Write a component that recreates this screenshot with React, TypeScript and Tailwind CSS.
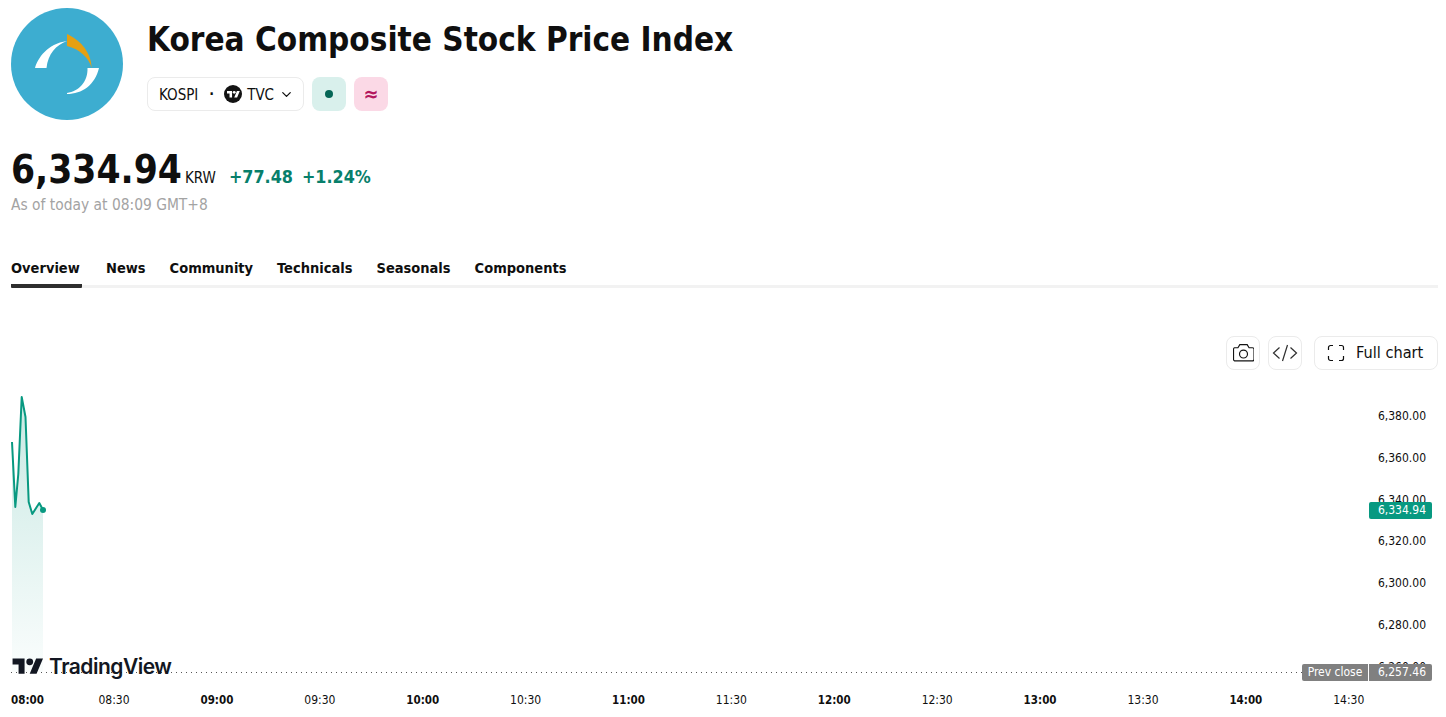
import React from 'react';
import { ChevronDown } from 'lucide-react';

const tabs = ['Overview', 'News', 'Community', 'Technicals', 'Seasonals', 'Components'];

const priceTicks = ['6,380.00', '6,360.00', '6,340.00', '6,320.00', '6,300.00', '6,280.00', '6,260.00'];

const timeTicks = [
  { label: '09:00', bold: true },
  { label: '09:30' },
  { label: '10:00', bold: true },
  { label: '10:30' },
  { label: '11:00', bold: true },
  { label: '11:30' },
  { label: '12:00', bold: true },
  { label: '12:30' },
  { label: '13:00', bold: true },
  { label: '13:30' },
  { label: '14:00', bold: true },
  { label: '14:30' },
];

const linePoints = '12,442 15.3,507 18.3,474 21.7,397 25.5,417 28.7,502 32.3,514 39.3,503 43,510';

const TvMark = ({ className }: { className?: string }) => (
  <svg viewBox="0 0 36 28" className={className} fill="currentColor">
    <path d="M14 22H7V11H0V4h14v18zM28 22h-8l7.5-18h8L28 22z" />
    <circle cx="20" cy="8" r="4" />
  </svg>
);

const KospiLogo = () => (
  <div className="w-[112px] h-[112px] rounded-full bg-[#3dadd0] shrink-0">
    <svg viewBox="0 0 112 112" className="w-full h-full">
      <path d="M24 60 C27 50 36 36 56 33 C45 37 37 46 35.5 60 Z" fill="#fff" />
      <path d="M56 26 C67 31 80 42 80.7 60 C78 50 69 41 56 38 Z" fill="#e5a012" />
      <path d="M88 60 C84 77 71 86 56 86 L56 85 C68 83 77 74 76.5 60 Z" fill="#fff" />
    </svg>
  </div>
);

const App = () => {
  return (
    <div className="w-[1446px] h-[717px] overflow-hidden bg-white text-[#131722] font-['DejaVu_Sans_Condensed','DejaVu_Sans',sans-serif] font-stretch-condensed">
      <div className="px-[11px] pt-2">
        <div className="flex gap-6">
          <KospiLogo />
          <div className="pt-[9px]">
            <h1 className="text-[33px] leading-[46px] font-bold text-[#0f0f0f]">Korea Composite Stock Price Index</h1>
            <div className="flex items-center gap-2 mt-[14px]">
              <div className="h-[34px] w-[157px] flex items-center pl-[11px] rounded-lg border border-[#ebebeb] text-[15px] leading-[22px] text-[#0f0f0f]">
                <span className="pt-[1px]">KOSPI</span>
                <span className="ml-[11px] mr-[10px] text-[14px] font-bold">·</span>
                <span className="w-[18px] h-[18px] rounded-full bg-[#131313] text-white flex items-center justify-center">
                  <TvMark className="w-[13px] h-[11px]" />
                </span>
                <span className="ml-[5px] pt-[1px]">TVC</span>
                <ChevronDown className="w-[15px] h-[15px] ml-[5px]" />
              </div>
              <div className="w-[34px] h-[34px] rounded-lg bg-[#d9f0ec] flex items-center justify-center">
                <span className="w-2 h-2 rounded-full bg-[#056656]" />
              </div>
              <div className="w-[34px] h-[34px] rounded-lg bg-[#fbd9e6] flex items-center justify-center text-[#b3175e] text-[20px] font-bold">≈</div>
            </div>
          </div>
        </div>

        <div className="flex items-baseline mt-[26px] h-[48px]">
          <span className="text-[38.5px] leading-[48px] font-bold text-[#0f0f0f]">6,334.94</span>
          <span className="text-[15px] ml-[3px] text-[#0f0f0f]">KRW</span>
          <span className="text-[17.8px] font-bold text-[#087f6b] ml-[13px]">+77.48</span>
          <span className="text-[17.8px] font-bold text-[#087f6b] ml-[9px]">+1.24%</span>
        </div>
        <p className="text-[15.4px] leading-[20px] text-[#a3a3a3] mt-[1px]">As of today at 08:09 GMT+8</p>

        <div className="mt-[37px] flex gap-6 border-b-[3px] border-[#f2f2f2] h-[36px] w-[1427px]">
          {tabs.map((tab, index) => (
            <div
              key={index}
              className={`h-[36px] pt-[6px] text-[14.5px] font-bold text-[#0f0f0f] ${index === 0 ? 'w-[71px] border-b-[4px] border-[#2e2e2e] rounded-b-[1px]' : ''}`}
            >
              {tab}
            </div>
          ))}
        </div>

        <div className="flex justify-end mt-[48px] w-[1427px]">
          <button className="w-[34px] h-[34px] rounded-lg border border-[#ebebeb] flex items-center justify-center text-[#131313]">
            <svg viewBox="1 1 20 17" className="w-[21px] h-[18px]" fill="none" stroke="currentColor" strokeWidth="1.1">
              <path d="M2.5 4.5h3.2L7.5 1.5h7l1.8 3h3.2a1.5 1.5 0 0 1 1.5 1.5v9.5a1.5 1.5 0 0 1-1.5 1.5h-17A1.5 1.5 0 0 1 1.5 15.5V6a1.5 1.5 0 0 1 1-1.5z" />
              <circle cx="11" cy="10.5" r="3.8" />
            </svg>
          </button>
          <button className="w-[34px] h-[34px] ml-2 rounded-lg border border-[#ebebeb] flex items-center justify-center text-[#2e2e2e]">
            <svg viewBox="0 0 26 18" className="w-[26px] h-[18px]" fill="none" stroke="currentColor" strokeWidth="1.2">
              <path d="M7.5 3.5 1.5 9l6 5.5M18.5 3.5l6 5.5-6 5.5M15.5 1l-5 16" />
            </svg>
          </button>
          <button className="w-[124px] h-[34px] ml-3 rounded-lg border border-[#ebebeb] flex items-center pl-[12px] text-[16.2px] text-[#0f0f0f]">
            <svg viewBox="0 0 18 18" className="w-[18px] h-[18px] mr-[11px]" fill="none" stroke="currentColor" strokeWidth="1.2">
              <path d="M1.5 6V3.5a2 2 0 0 1 2-2H6M12 1.5h2.5a2 2 0 0 1 2 2V6M16.5 12v2.5a2 2 0 0 1-2 2H12M6 16.5H3.5a2 2 0 0 1-2-2V12" />
            </svg>
            <span className="pt-[1px]">Full chart</span>
          </button>
        </div>
      </div>

      {/* chart canvas */}
      <div className="relative h-[347px] w-[1446px] text-[12px] leading-[16px] text-[#0f0f0f]">
        <svg className="absolute inset-0 w-full h-[303px]" viewBox="0 370 1446 303">
          <defs>
            <linearGradient id="areaFill" x1="0" y1="0" x2="0" y2="1">
              <stop offset="0%" stopColor="#089981" stopOpacity="0.22" />
              <stop offset="100%" stopColor="#089981" stopOpacity="0.02" />
            </linearGradient>
          </defs>
          <polygon points={`${linePoints} 43,672 12,672`} fill="url(#areaFill)" />
          <polyline points={linePoints} fill="none" stroke="#089981" strokeWidth="2" strokeLinejoin="round" />
          <circle cx="43" cy="510" r="3" fill="#089981" />
          <line x1="11" y1="672.5" x2="1302" y2="672.5" stroke="#555" strokeWidth="1" strokeDasharray="1 4" />
        </svg>

        <div className="absolute left-[12px] top-[285px] flex items-center gap-[5px] text-[#131722]">
          <TvMark className="w-[32px] h-[24px]" />
          <span className="font-['Inter',sans-serif] text-[21px] leading-[24px] font-semibold tracking-[-0.5px]">TradingView</span>
        </div>

        <div className="absolute right-[20px] top-[26px] flex flex-col items-end">
          {priceTicks.map((tick) => (
            <div key={tick} className="h-[41.75px] leading-[41.75px]">{tick}</div>
          ))}
        </div>

        <div className="absolute left-[1369px] top-[132px] w-[63px] h-[17px] pr-[6px] rounded-[2px] bg-[#089981] text-white text-right leading-[16px]">6,334.94</div>

        <div className="absolute left-[1302px] top-[294px] flex gap-px text-white leading-[16px]">
          <div className="w-[66px] h-[17px] rounded-l-[2px] bg-[#808080] text-center">Prev close</div>
          <div className="w-[63px] h-[17px] pr-[6px] rounded-r-[2px] bg-[#808080] text-right">6,257.46</div>
        </div>

        <div className="absolute left-0 top-[322px] flex items-start">
          <div className="w-[54px] pl-[11px] text-[11.5px] font-bold">08:00</div>
          <div className="w-[60px]" />
          <div className="w-0 flex justify-center">08:30</div>
          <div className="flex ml-[51.5px]">
            {timeTicks.map((tick) => (
              <div key={tick.label} className={`w-[102.9px] text-center ${tick.bold ? 'text-[11.5px] font-bold' : ''}`}>{tick.label}</div>
            ))}
          </div>
        </div>
      </div>
    </div>
  );
};

export default App;
